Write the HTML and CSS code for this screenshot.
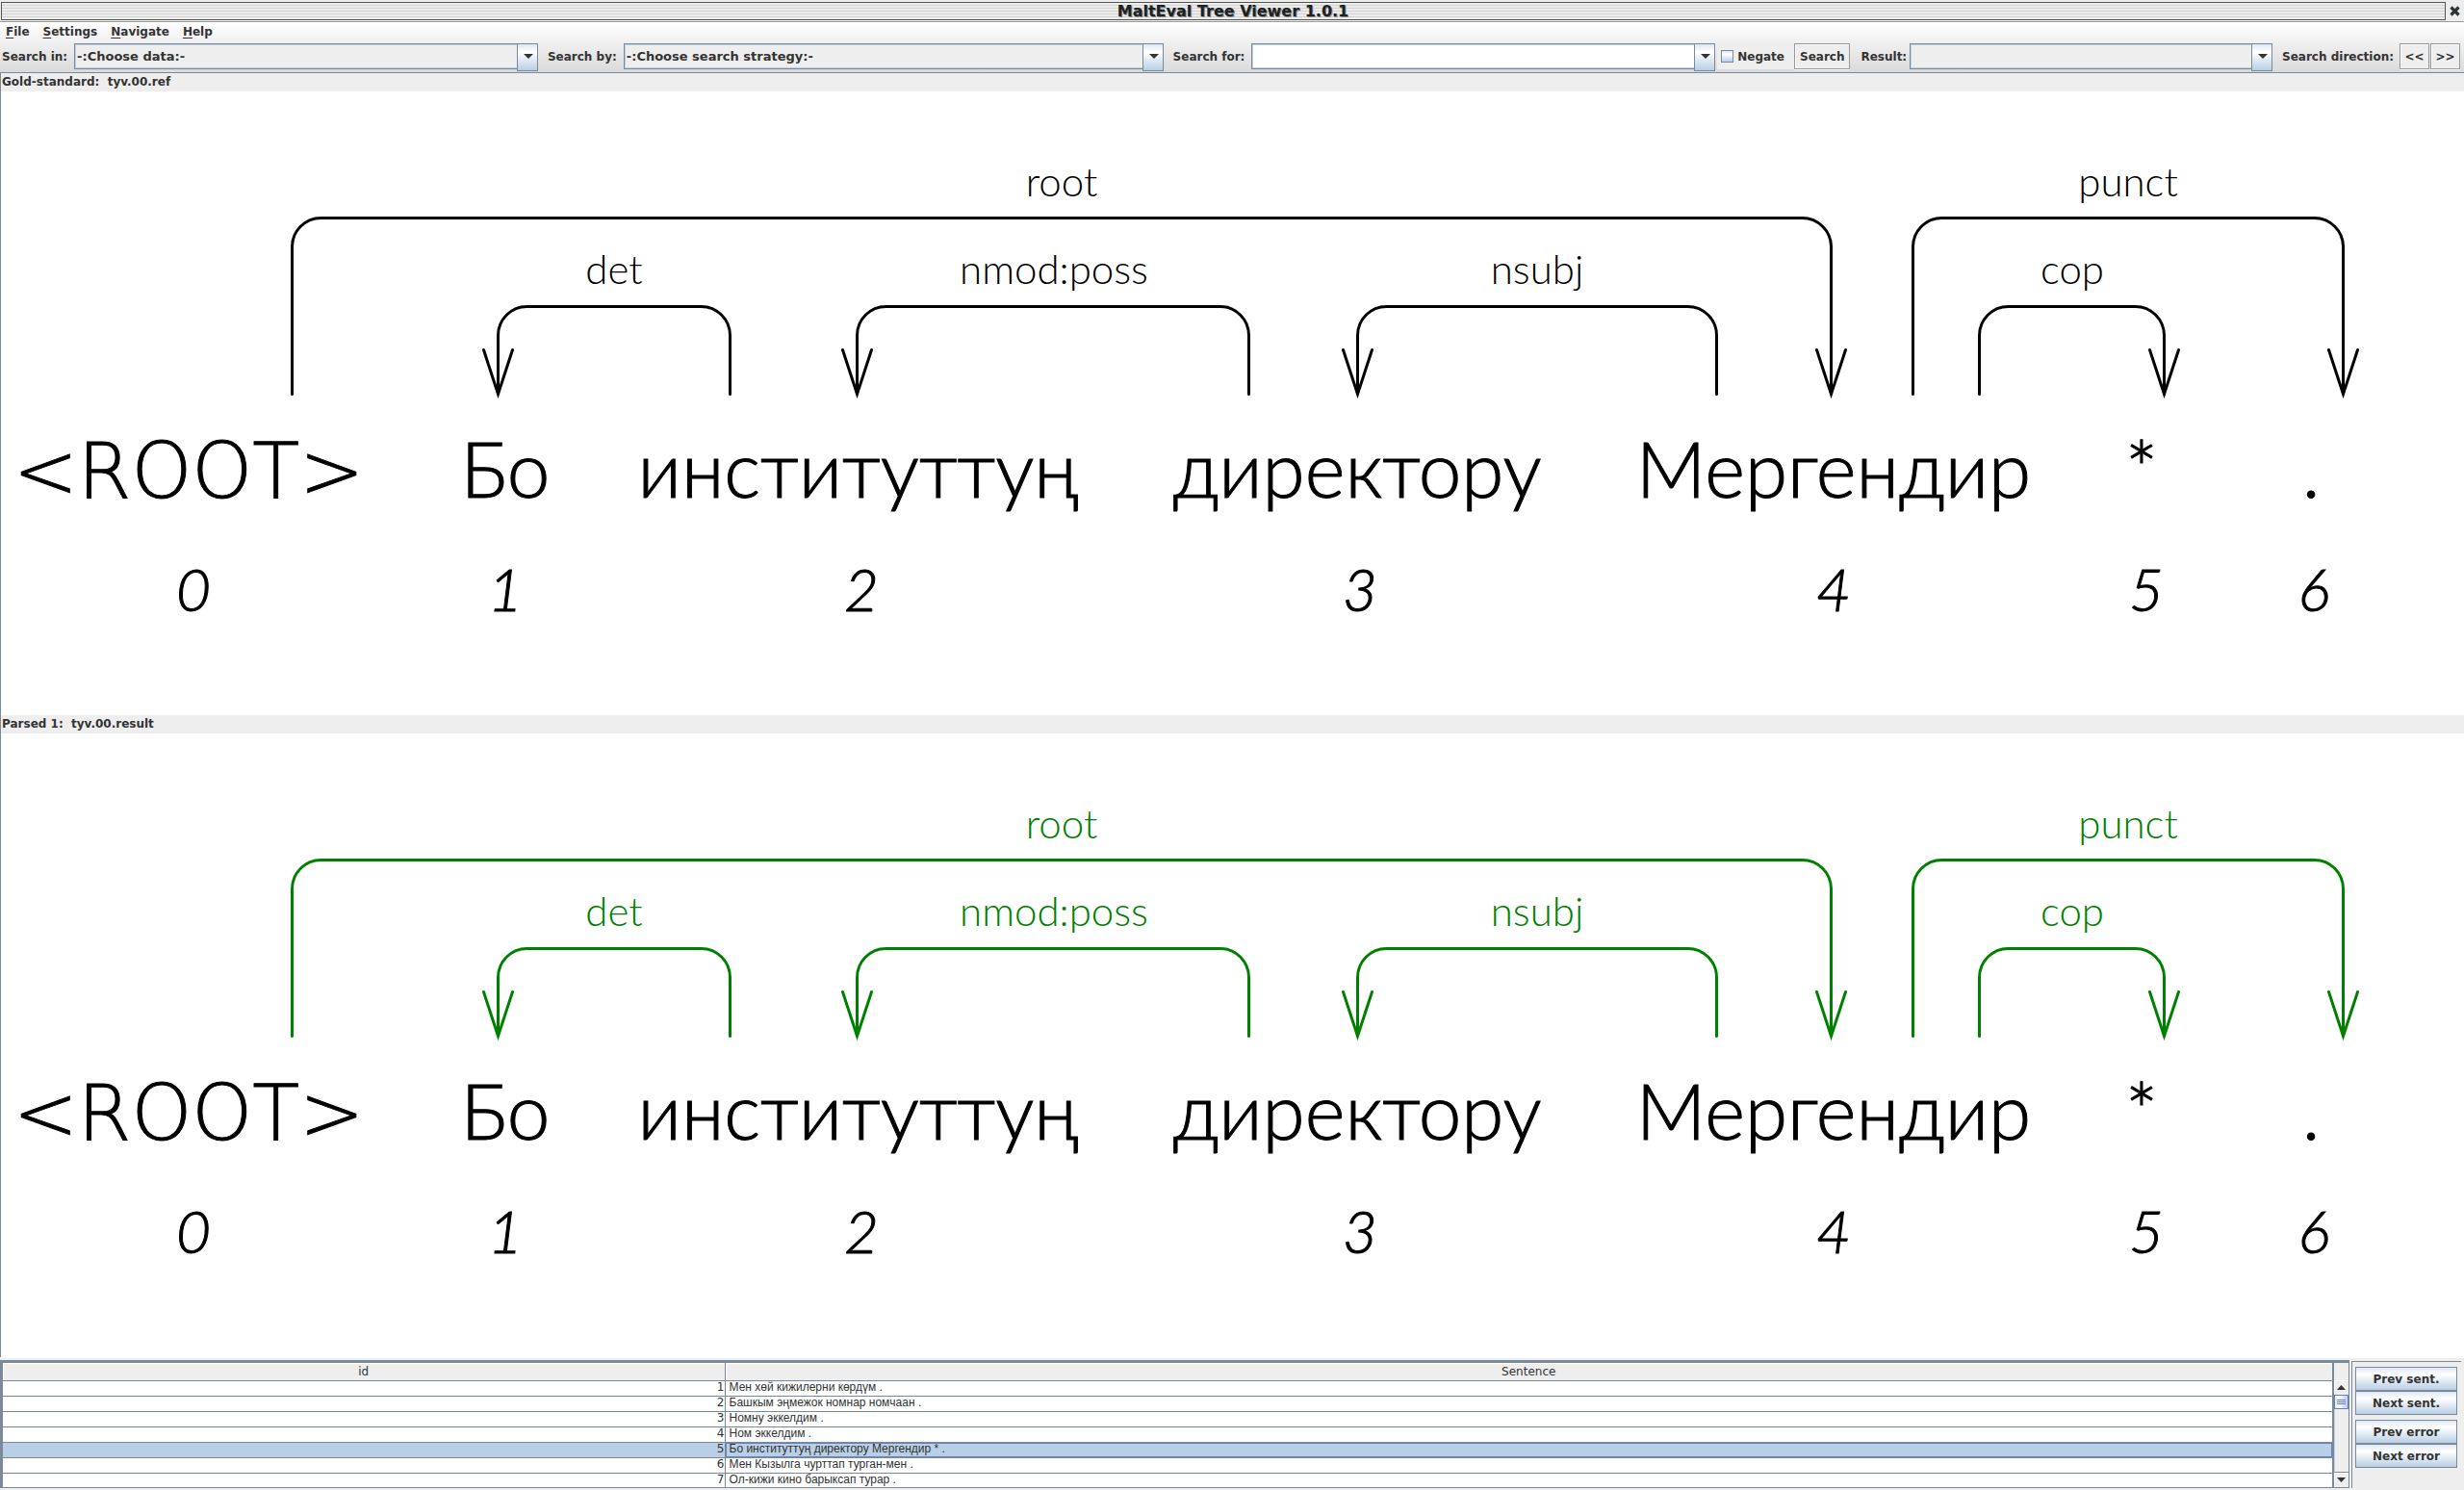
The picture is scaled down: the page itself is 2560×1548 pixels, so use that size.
FILE: index.html
```html
<!DOCTYPE html>
<html lang="en">
<head>
<meta charset="utf-8">
<title>MaltEval Tree Viewer 1.0.1</title>
<link rel="stylesheet" href="styles.css">
</head>
<body>
<header class="titlebar">
  <div class="titlebar-grip"><h1>MaltEval Tree Viewer 1.0.1</h1></div>
  <button class="close" type="button" aria-label="Close">
    <svg width="11" height="11" viewBox="0 0 11 11"><path d="M1.5 1.5l8 8M9.500 1.500l-8 8" stroke="#2e3436" stroke-width="3.200" fill="none"/></svg>
  </button>
</header>

<div class="controls">
  <nav class="menubar">
    <button type="button"><u>F</u>ile</button>
    <button type="button"><u>S</u>ettings</button>
    <button type="button"><u>N</u>avigate</button>
    <button type="button"><u>H</u>elp</button>
  </nav>
  <form class="toolbar">
    <label for="data">Search in:</label>
    <div class="combo combo-medium"><select id="data"><option>-:Choose data:-</option></select></div>
    <label for="strategy">Search by:</label>
    <div class="combo combo-wide"><select id="strategy"><option>-:Choose search strategy:-</option></select></div>
    <label for="query">Search for:</label>
    <div class="combo combo-medium"><input id="query" type="text"></div>
    <label class="negate"><input type="checkbox">Negate</label>
    <button class="flat" type="button">Search</button>
    <label class="tight" for="result">Result:</label>
    <div class="combo combo-narrow"><select id="result"><option></option></select></div>
    <span class="direction">Search direction:</span>
    <button class="flat step" type="button">&lt;&lt;</button>
    <button class="flat step" type="button">&gt;&gt;</button>
  </form>
</div>

<main class="trees">
  <section class="pane">
    <h2>Gold-standard:&nbsp; tyv.00.ref</h2>
    <svg class="tree" role="img" aria-label="Gold-standard dependency tree">
      <defs>
        <g id="arcs" transform="translate(.5 .5)">
          <path d="M303 314V161a30 30 0 0 1 30-30H1872a30 30 0 0 1 30 30V314M1887 268l15 46l15-46"/>
          <path d="M1987 314V161a30 30 0 0 1 30-30H2404a30 30 0 0 1 30 30V314M2419 268l15 46l15-46"/>
          <path d="M758 314V253a30 30 0 0 0-30-30H547a30 30 0 0 0-30 30V314M502 268l15 46l15-46"/>
          <path d="M1297 314V253a30 30 0 0 0-30-30H920a30 30 0 0 0-30 30V314M875 268l15 46l15-46"/>
          <path d="M1783 314V253a30 30 0 0 0-30-30H1440a30 30 0 0 0-30 30V314M1395 268l15 46l15-46"/>
          <path d="M2056 314V253a30 30 0 0 1 30-30H2218a30 30 0 0 1 30 30V314M2233 268l15 46l15-46"/>
        </g>
      </defs>
      <use class="arcs" href="#arcs"/>
      <g class="relations">
        <text x="1103" y="109">root</text>
        <text x="2211" y="109">punct</text>
        <text x="638" y="200">det</text>
        <text x="1095" y="200">nmod:poss</text>
        <text x="1597" y="200">nsubj</text>
        <text x="2153" y="200">cop</text>
      </g>
      <g class="words">
        <text class="root-token" x="196" y="422">&lt;ROOT&gt;</text>
        <text x="525" y="422">Бо</text>
        <text x="892" y="422">институттуң</text>
        <text x="1410" y="422">директору</text>
        <text x="1905" y="422">Мергендир</text>
        <text x="2225" y="422">*</text>
        <text x="2401" y="422">.</text>
      </g>
      <g class="indices">
        <text x="201" y="540">0</text>
        <text x="525" y="540">1</text>
        <text x="895" y="540">2</text>
        <text x="1413" y="540">3</text>
        <text x="1905" y="540">4</text>
        <text x="2230" y="540">5</text>
        <text x="2404" y="540">6</text>
      </g>
    </svg>
  </section>

  <section class="pane parsed">
    <h2>Parsed 1:&nbsp; tyv.00.result</h2>
    <svg class="tree" role="img" aria-label="Parsed dependency tree">
      <use class="arcs" href="#arcs"/>
      <g class="relations">
        <text x="1103" y="109">root</text>
        <text x="2211" y="109">punct</text>
        <text x="638" y="200">det</text>
        <text x="1095" y="200">nmod:poss</text>
        <text x="1597" y="200">nsubj</text>
        <text x="2153" y="200">cop</text>
      </g>
      <g class="words">
        <text class="root-token" x="196" y="422">&lt;ROOT&gt;</text>
        <text x="525" y="422">Бо</text>
        <text x="892" y="422">институттуң</text>
        <text x="1410" y="422">директору</text>
        <text x="1905" y="422">Мергендир</text>
        <text x="2225" y="422">*</text>
        <text x="2401" y="422">.</text>
      </g>
      <g class="indices">
        <text x="201" y="540">0</text>
        <text x="525" y="540">1</text>
        <text x="895" y="540">2</text>
        <text x="1413" y="540">3</text>
        <text x="1905" y="540">4</text>
        <text x="2230" y="540">5</text>
        <text x="2404" y="540">6</text>
      </g>
    </svg>
  </section>
</main>

<footer class="browser">
  <div class="sentences">
    <table>
      <colgroup><col class="col-id"><col></colgroup>
      <thead><tr><th>id</th><th>Sentence</th></tr></thead>
      <tbody>
        <tr><td>1</td><td>Мен хөй кижилерни көрдүм .</td></tr>
        <tr><td>2</td><td>Башкым эңмежок номнар номчаан .</td></tr>
        <tr><td>3</td><td>Номну эккелдим .</td></tr>
        <tr><td>4</td><td>Ном эккелдим .</td></tr>
        <tr class="selected"><td>5</td><td>Бо институттуң директору Мергендир * .</td></tr>
        <tr><td>6</td><td>Мен Кызылга чурттап турган-мен .</td></tr>
        <tr><td>7</td><td>Ол-кижи кино барыксап турар .</td></tr>
      </tbody>
    </table>
    <div class="scrollbar">
      <button class="scroll-step" type="button" aria-label="Scroll up"><svg width="9" height="5"><path d="M0 5L4.500 0L9 5z" fill="#333"/></svg></button>
      <div class="track"><div class="thumb"><i></i><i></i><i></i></div></div>
      <button class="scroll-step" type="button" aria-label="Scroll down"><svg width="9" height="5"><path d="M0 0L4.500 5L9 0z" fill="#333"/></svg></button>
    </div>
  </div>
  <div class="actions">
    <button type="button">Prev sent.</button>
    <button type="button">Next sent.</button>
    <button class="group-start" type="button">Prev error</button>
    <button type="button">Next error</button>
  </div>
</footer>
</body>
</html>
```

FILE: styles.css
```css
* { box-sizing: border-box; }

body {
  margin: 0;
  min-height: 100vh;
  display: flex;
  flex-direction: column;
  background: #eee;
  color: #333;
  font: bold 12px/16px "DejaVu Sans", sans-serif;
}

h1, h2 { margin: 0; font-size: inherit; }
button, input, select { font: inherit; color: inherit; margin: 0; }

/* Window frame */
.titlebar {
  display: flex;
  height: 23px;
  padding: 2px 0 1px 1px;
  background: #ededed;
  border-bottom: 1px solid #9a9c98;
}
.titlebar-grip {
  flex: 1;
  height: 19px;
  padding-left: 20px;
  border: 1px solid #555753;
  background: repeating-linear-gradient(#ececec 0 2px, #d3d3d3 2px 3px);
  text-align: center;
}
.titlebar h1 {
  color: #1c2224;
  font-size: 16px;
  line-height: 18px;
  text-shadow: 1px 1px 0 #888;
}
.close {
  width: 19px;
  height: 19px;
  padding: 0;
  border: 0;
  background: none;
  display: grid;
  place-items: center;
}

/* Menus and search bar */
.controls {
  height: 52px;
  background: linear-gradient(#fff, #dadada);
}
.menubar {
  display: flex;
  gap: 14px;
  height: 22px;
  padding: 0 6px;
}
.menubar button {
  padding: 0 0 3px;
  border: 0;
  background: none;
  line-height: 18px;
}
.menubar u { text-underline-offset: 2px; }

.toolbar {
  display: flex;
  align-items: center;
  height: 27px;
  padding: 0 4px 0 2px;
}
.toolbar label, .direction { white-space: nowrap; }
.toolbar label { padding-right: 7px; }
.toolbar .combo + label { padding-left: 10px; }
.toolbar .combo + .negate {
  display: flex;
  align-items: center;
  gap: 4px;
  height: 27px;
  margin-left: 2px;
  padding: 0 10px 0 4px;
  background: #eee;
}
.toolbar .tight { padding: 0 3px 0 11px; }
.direction { padding: 0 6px 0 10px; }

.negate input {
  appearance: none;
  width: 13px;
  height: 13px;
  border: 1px solid #7a8a99;
  background: linear-gradient(#dde8f3, #fff 30%, #b8cfe5);
}

.combo {
  position: relative;
  min-width: 0;
  height: 27px;
}
.combo-narrow { flex: 377 1 0; }
.combo-medium { flex: 482 1 0; }
.combo-wide { flex: 561 1 0; }
.combo select, .combo input {
  appearance: none;
  display: block;
  width: 100%;
  height: 27px;
  padding: 0 22px 0 2px;
  border: 1px solid #7a8a99;
  border-radius: 0;
  outline: 1px solid #b8cfe5;
  outline-offset: -2px;
  background: #eee;
  font-size: 13px;
}
.combo input { background: #fff; }
.combo::before {
  content: "";
  position: absolute;
  right: 0;
  top: 0;
  width: 20px;
  height: 27px;
  border: 1px solid #7a8a99;
  background: linear-gradient(#dde8f3, #fff 30%, #b8cfe5);
  pointer-events: none;
}
.combo::after {
  content: "";
  position: absolute;
  right: 5px;
  top: 11px;
  border: 5px solid transparent;
  border-top-color: #333;
  border-bottom: 0;
  pointer-events: none;
}

.flat {
  height: 27px;
  padding: 0 5px;
  border: 1px solid #999;
  background: #eee;
  box-shadow: inset 1px 1px #fff, 0 1px #fff;
}
.step { width: 31px; padding: 0; }
.step + .step { margin-left: 1px; }

/* Dependency trees */
.trees {
  flex: 1;
  display: flex;
  flex-direction: column;
  border-top: 1px solid #7a8a99;
  border-left: 1px solid #7a8a99;
}
.pane {
  flex: 1;
  display: flex;
  flex-direction: column;
  background: #fff;
}
.pane h2 {
  height: 19px;
  padding-left: 1px;
  line-height: 19px;
  background: #eee;
}
.tree {
  flex: 1;
  width: 100%;
  min-height: 600px;
  margin-left: -1px;
  overflow: visible;
  color: #000;
}
.arcs {
  fill: none;
  stroke: currentColor;
  stroke-width: 3px;
  stroke-linecap: round;
}
.tree text {
  font-family: Lato, sans-serif;
  font-weight: 300;
  text-anchor: middle;
}
.words { font-size: 80px; }
.words, .indices { stroke: currentColor; stroke-width: 1px; }
.tree .root-token {
  font-family: "DejaVu Sans", sans-serif;
  font-weight: 200;
  font-size: 80px;
}
.relations { font-size: 42px; fill: currentColor; }
.indices { font-size: 62px; font-style: italic; }
.parsed .arcs, .parsed .relations { color: #008000; }

/* Sentence list */
.browser {
  display: flex;
  height: 138px;
  padding-right: 3px;
  border-top: 1px solid #fff;
}
.sentences {
  flex: 1;
  display: flex;
  height: 133px;
  margin-top: 2px;
  border: solid #7a8a99;
  border-width: 3px 1px 1px 3px;
  overflow: hidden;
}
table {
  flex: 1;
  border-collapse: separate;
  border-spacing: 0;
  table-layout: fixed;
  font-weight: normal;
  background: #fff;
}
.col-id { width: 31%; }
th, td {
  height: 16px;
  padding: 0;
  border: solid #7a8a99;
  border-width: 0 1px 1px 0;
  line-height: 13px;
}
th {
  height: 19px;
  background: #eee;
  box-shadow: inset 1px 1px #fff;
  font-weight: normal;
}
td { vertical-align: top; }
td:first-child { text-align: right; }
td:last-child {
  padding-left: 4px;
  font-family: "Liberation Sans", sans-serif;
}
.selected td { background: #b8cfe5; }
.selected td:last-child { box-shadow: inset 0 0 0 1px #6382bf; }

.scrollbar {
  display: flex;
  flex-direction: column;
  width: 16px;
  padding-top: 18px;
  border-left: 1px solid #7a8a99;
}
.scroll-step {
  display: grid;
  place-items: center;
  height: 15px;
  padding: 0;
  border: 0;
  background: #eee;
  box-shadow: inset 1px 1px #fff;
}
.track {
  flex: 1;
  border-left: 1px solid #b8cfe5;
  border-bottom: 1px solid #7a8a99;
}
.thumb {
  display: flex;
  flex-direction: column;
  gap: 1px;
  height: 15px;
  margin-left: -1px;
  padding: 4px 2px;
  border: 1px solid #6382bf;
  background: linear-gradient(90deg, #dde8f3, #fff 30%, #b8cfe5);
}
.thumb i { height: 1px; background: #6382bf; }

.actions {
  width: 114px;
  margin: 3px 0 2px 2px;
  padding: 5px 4px 0 3px;
  border-left: 1px solid #7a8a99;
  border-top: 1px solid #7a8a99;
}
.actions button {
  display: block;
  width: 100%;
  height: 25px;
  padding: 0;
  border: 1px solid #7a8a99;
  background: linear-gradient(#dde8f3, #fff 30%, #b8cfe5);
}
.actions .group-start { margin-top: 5px; }
```
